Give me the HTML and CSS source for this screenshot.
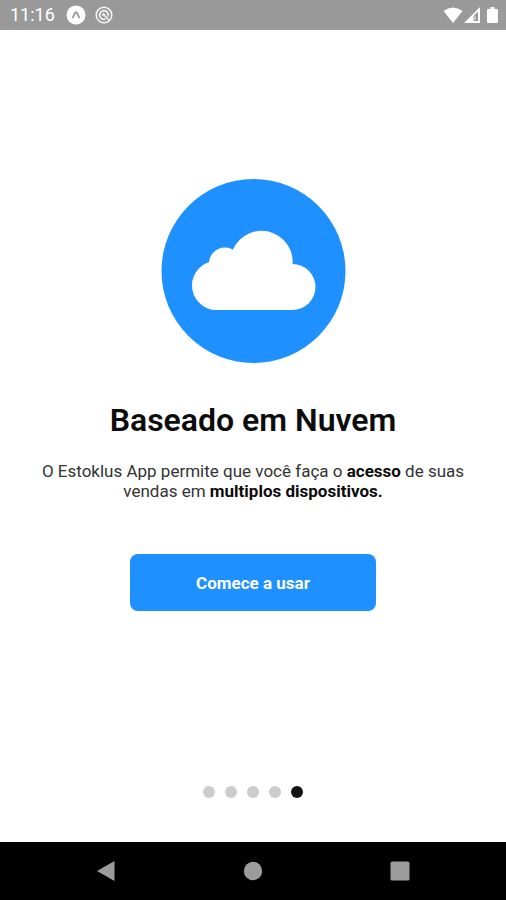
FILE: index.html
```html
<!DOCTYPE html>
<html lang="pt-BR">
<head>
  <meta charset="utf-8">
  <meta name="viewport" content="width=device-width, initial-scale=1">
  <title>Estoklus</title>
  <link rel="stylesheet" href="styles.css">
</head>
<body>
  <header class="status">
    <div class="status-left">
      <span class="clock">11:16</span>
      <svg width="20" height="20" viewBox="0 0 20 20" aria-hidden="true">
        <circle cx="10" cy="10" r="9.5" fill="#fff"/>
        <path d="M6.5 13.2 9.3 7.5h1.4l2.8 5.7" fill="none" stroke="#999" stroke-width="1.8"/>
      </svg>
      <svg width="18" height="18" viewBox="0 0 18 18" fill="none" stroke="#f4f4f4" aria-hidden="true">
        <circle cx="9" cy="9" r="7.8" stroke-width="1.6"/>
        <path d="M10.500 13A4.300 4.300 0 1 1 13 10.500M8.500 8.500l5.500 5.500" stroke-width="1.700"/>
        <circle cx="8.500" cy="8.500" r="1" fill="#f4f4f4"/>
      </svg>
    </div>
    <div class="status-right">
      <svg width="20" height="16" viewBox="0 0 20 16" aria-hidden="true">
        <path d="M10 16 .5 4Q10-3 19.500 4Z" fill="#fff"/>
      </svg>
      <svg width="16" height="16" viewBox="0 0 16 16" aria-hidden="true">
        <path fill-rule="evenodd" d="M16 0v16H0ZM9.500 9v5h4.500V4.500Z" fill="#fff"/>
        <path d="M11 9.500v3.500" stroke="#fff" stroke-width="1"/>
      </svg>
      <svg class="battery" width="11" height="16" viewBox="0 0 11 16" aria-hidden="true">
        <path d="M3.500 0h4v2H10q1 0 1 1v12q0 1-1 1H1q-1 0-1-1V3q0-1 1-1h2.500Z" fill="#fff"/>
      </svg>
    </div>
  </header>

  <main class="slide">
    <svg class="hero" width="185" height="184" viewBox="0 0 185 184" aria-hidden="true">
      <circle cx="92.500" cy="92" r="92" fill="#1e90ff"/>
      <g fill="#fff" transform="translate(1 0)">
        <circle cx="54.500" cy="106.500" r="24.500"/>
        <circle cx="63" cy="84.500" r="16"/>
        <circle cx="99.500" cy="83" r="31.200"/>
        <circle cx="130.500" cy="108" r="23"/>
        <path d="M54.500 85h76v46h-76z"/>
      </g>
    </svg>
    <h1 class="title">Baseado em Nuvem</h1>
    <p class="text">O Estoklus App permite que você faça o <strong>acesso</strong> de suas vendas em <strong>multiplos dispositivos.</strong></p>
    <button class="start" type="button">Comece a usar</button>
    <div class="dots">
      <span class="dot"></span>
      <span class="dot"></span>
      <span class="dot"></span>
      <span class="dot"></span>
      <span class="dot dot-active"></span>
    </div>
  </main>

  <nav class="system">
    <button class="key" type="button" aria-label="Voltar">
      <svg width="20" height="22" viewBox="0 0 20 22"><path d="M18.500 1v20L1 11Z" fill="#9c9c9c"/></svg>
    </button>
    <button class="key" type="button" aria-label="Início">
      <svg width="20" height="20" viewBox="0 0 20 20"><circle cx="10" cy="10" r="9.200" fill="#9c9c9c"/></svg>
    </button>
    <button class="key" type="button" aria-label="Recentes">
      <svg width="20" height="20" viewBox="0 0 20 20"><rect x=".5" y=".5" width="19" height="19" rx="1.500" fill="#9c9c9c"/></svg>
    </button>
  </nav>
</body>
</html>
```
FILE: styles.css
```css
* {
  box-sizing: border-box;
}

body {
  display: flex;
  flex-direction: column;
  min-height: 100vh;
  margin: 0;
  background: #fff;
  color: #0c0c0c;
  font-family: Roboto, "Liberation Sans", sans-serif;
}

svg {
  display: block;
}

.status {
  display: flex;
  align-items: center;
  justify-content: space-between;
  height: 30px;
  padding: 0 8px 0 10px;
  background: #999;
  color: #fff;
}

.status-left,
.status-right {
  display: flex;
  align-items: center;
}

.status-left {
  gap: 9px;
}

.status-right {
  gap: 1px;
}

.battery {
  margin-left: 6px;
}

.clock {
  margin-right: 2px;
  font-size: 18px;
  line-height: 20px;
}

.slide {
  display: flex;
  flex: 1;
  flex-direction: column;
  align-items: center;
  padding: 149px 32px 44px;
}

.title {
  margin: 36px 0 20px;
  font-size: 32px;
  font-weight: 600;
  line-height: 42px;
  text-align: center;
}

.text {
  max-width: 442px;
  margin: 0 0 53px;
  color: #333;
  font-size: 17px;
  font-weight: 400;
  line-height: 20px;
  text-align: center;
}

.text strong {
  color: #0c0c0c;
  font-weight: 700;
}

.start {
  width: 246px;
  height: 57px;
  border: 0;
  border-radius: 8px;
  background: #1e90ff;
  color: #fff;
  font: 700 17px/20px Roboto, "Liberation Sans", sans-serif;
}

.dots {
  display: flex;
  gap: 10px;
  margin-top: auto;
}

.dot {
  width: 12px;
  height: 12px;
  border-radius: 50%;
  background: #ccc;
}

.dot-active {
  background: #141414;
}

.system {
  display: flex;
  height: 58px;
  padding: 0 33px;
  background: #000;
}

.key {
  display: flex;
  flex: 1;
  align-items: center;
  justify-content: center;
  padding: 0;
  border: 0;
  background: none;
}
```
